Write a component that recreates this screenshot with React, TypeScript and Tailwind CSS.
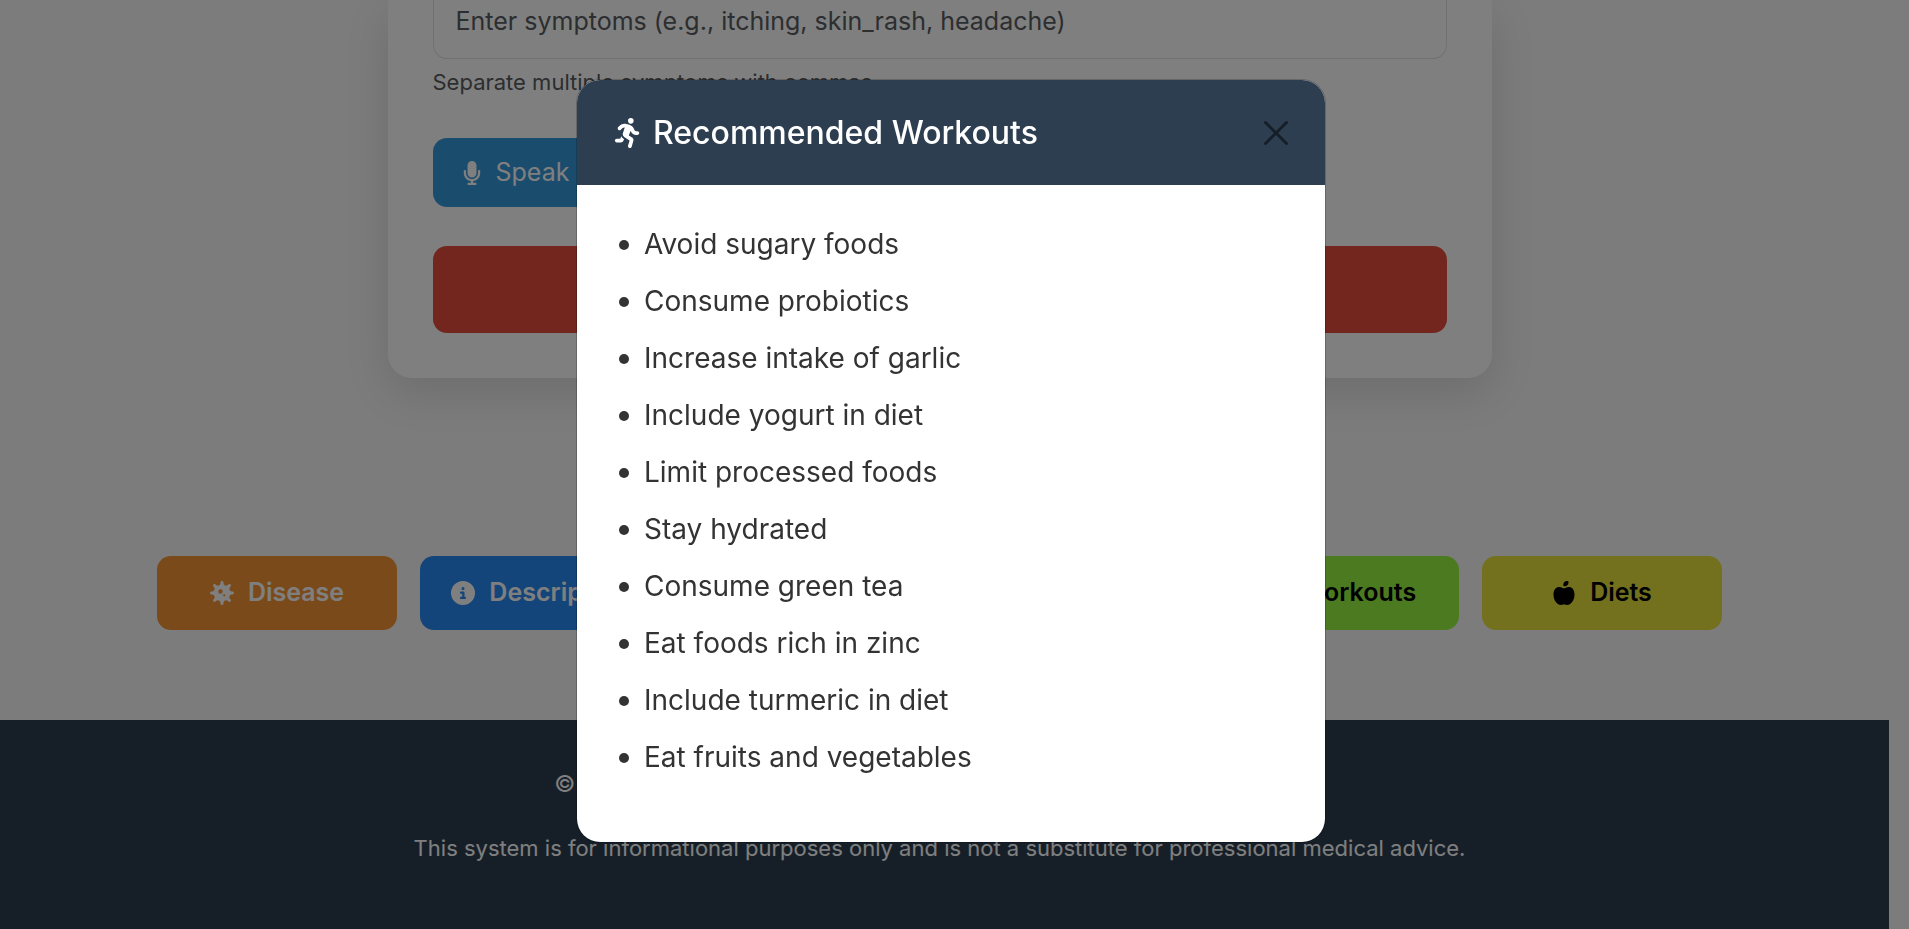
import { useState } from "react";
import {
  FaAppleWhole,
  FaCircleInfo,
  FaMicrophone,
  FaPersonRunning,
  FaPills,
  FaShieldHalved,
  FaVirus,
} from "react-icons/fa6";

const workouts = [
  "Avoid sugary foods",
  "Consume probiotics",
  "Increase intake of garlic",
  "Include yogurt in diet",
  "Limit processed foods",
  "Stay hydrated",
  "Consume green tea",
  "Eat foods rich in zinc",
  "Include turmeric in diet",
  "Eat fruits and vegetables",
];

const tabs = [
  { label: "Disease", icon: FaVirus, tone: "w-60 bg-[#f49434] text-white" },
  { label: "Description", icon: FaCircleInfo, tone: "w-60 bg-[#288af4] text-white" },
  { label: "Precautions", icon: FaShieldHalved, tone: "w-[245px] bg-[#e74c9c] text-white" },
  { label: "Medications", icon: FaPills, tone: "w-[245px] bg-[#3cc8b4] text-white" },
  { label: "Workouts", icon: FaPersonRunning, tone: "w-60 bg-[#98f440] text-black" },
  { label: "Diets", icon: FaAppleWhole, tone: "w-60 bg-[#e6e23c] text-black" },
];

function SymptomForm() {
  return (
    <form
      onSubmit={(e) => e.preventDefault()}
      className="mx-auto w-full max-w-[1104px] rounded-b-3xl bg-white px-[45px] pb-[45px] shadow-[0_15px_45px_rgba(0,0,0,0.12)]"
    >
      <input
        type="text"
        aria-label="Symptoms"
        placeholder="Enter symptoms (e.g., itching, skin_rash, headache)"
        className="block h-[59px] w-full rounded-b-[14px] border border-t-0 border-[#dee2e6] bg-white px-[22px] pb-4 text-[25px] text-gray-800 placeholder:text-[#595c5f] placeholder:opacity-100"
      />
      <p className="mt-[7px] text-[22px] leading-8 text-[#595c5f]">Separate multiple symptoms with commas.</p>
      <button
        type="button"
        className="mt-10 flex h-[69px] items-center gap-3 rounded-[14px] bg-[#3498db] px-[27px] text-[25px] text-white"
      >
        <FaMicrophone className="size-6" />
        Speak Your Symptoms
      </button>
      <button
        type="submit"
        className="mt-[39px] h-[87px] w-full rounded-[14px] bg-[#e74c3c] text-[27px] font-semibold text-white"
      >
        Predict Disease
      </button>
    </form>
  );
}

function ResultTabs() {
  return (
    <nav className="flex justify-center gap-[23px]">
      {tabs.map(({ label, icon: Icon, tone }) => (
        <button
          key={label}
          type="button"
          className={`flex h-[74px] items-center justify-center gap-3.5 rounded-[14px] text-[25px] font-semibold ${tone}`}
        >
          <Icon className="size-6" />
          {label}
        </button>
      ))}
    </nav>
  );
}

function WorkoutsDialog({ onClose }: { onClose: () => void }) {
  return (
    <div className="fixed inset-0 flex items-start justify-center bg-black/50 pt-[79px] pr-[7px]">
      <section
        role="dialog"
        aria-modal="true"
        aria-labelledby="dialog-title"
        className="w-full max-w-[750px] overflow-hidden rounded-3xl border border-black/20 bg-white bg-clip-padding"
      >
        <header className="flex h-[105px] items-center justify-between bg-[#2c3e50] pr-[37px] pl-9">
          <h2 id="dialog-title" className="flex items-center gap-2.5 text-[32px] font-medium text-white">
            <FaPersonRunning className="size-[30px]" />
            Recommended Workouts
          </h2>
          <button type="button" aria-label="Close" onClick={onClose} className="text-black/50">
            <svg viewBox="0 0 16 16" className="size-6" fill="currentColor">
              <path d="M.293.293a1 1 0 0 1 1.414 0L8 6.586 14.293.293a1 1 0 1 1 1.414 1.414L9.414 8l6.293 6.293a1 1 0 0 1-1.414 1.414L8 9.414l-6.293 6.293a1 1 0 0 1-1.414-1.414L6.586 8 .293 1.707a1 1 0 0 1 0-1.414z" />
            </svg>
          </button>
        </header>
        <ul className="px-[42px] pt-[31px] pb-14 text-[28px] leading-[57px] text-[#333]">
          {workouts.map((item) => (
            <li key={item} className="flex items-center gap-[15px]">
              <span className="size-2.5 rounded-full bg-[#333]" />
              {item}
            </li>
          ))}
        </ul>
      </section>
    </div>
  );
}

export default function App() {
  const [open, setOpen] = useState(true);
  return (
    <div className="flex h-screen flex-col overflow-hidden bg-[#f8f8f8] pr-5 font-[Inter,sans-serif]">
      <main className="flex flex-col gap-[178px] pr-2.5 pb-[90px]">
        <SymptomForm />
        <ResultTabs />
      </main>
      <footer className="flex grow flex-col items-center gap-[30px] bg-[#2c3e50] pt-[46px] pr-2.5 text-white">
        <p className="text-[23px] leading-9">© 2025 Disease Prediction and Recommendation System. Stay healthy</p>
        <p className="text-[22px] leading-8">
          This system is for informational purposes only and is not a substitute for professional medical advice.
        </p>
      </footer>
      {open && <WorkoutsDialog onClose={() => setOpen(false)} />}
    </div>
  );
}
